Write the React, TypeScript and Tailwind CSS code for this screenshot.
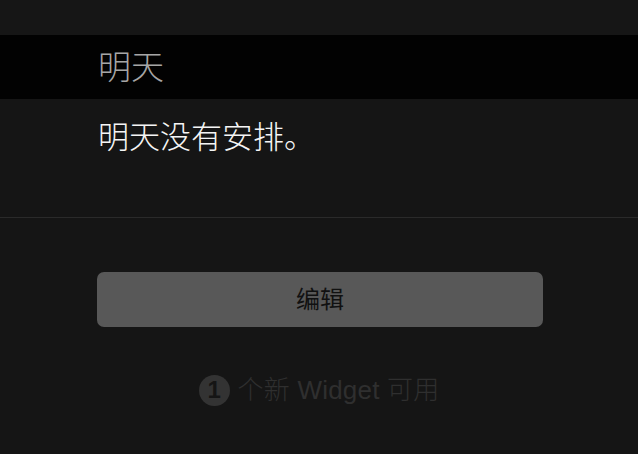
export default function App() {
  const font = { fontFamily: '"Liberation Sans", "Noto Sans CJK SC", sans-serif' };
  return (
    <div className="w-[638px] h-[454px] bg-[#151515] overflow-hidden flex flex-col" style={font}>
      <div className="h-[35px] bg-[#161616] shrink-0" />
      <div className="h-[64px] bg-[#020202] shrink-0 flex items-center pl-[98px]">
        <span className="text-[33px] leading-none font-light text-[#a6a6a6]">明天</span>
      </div>
      <div className="h-[118px] shrink-0 pl-[98px] pt-[20px]">
        <div className="text-[31px] leading-[38px] font-light text-[#f5f5f5]">明天没有安排。</div>
      </div>
      <div className="h-px bg-[#2a2a2a] shrink-0" />
      <div className="flex flex-col items-center">
        <button className="mt-[54px] ml-[2px] w-[446px] h-[55px] rounded-[7px] bg-[#585858] text-[24px] font-normal text-[#111111] flex items-center justify-center">
          编辑
        </button>
        <div className="mt-[45px] flex items-center gap-[8px] h-[36px]">
          <div className="w-[31px] h-[31px] rounded-full bg-[#333333] flex items-center justify-center text-[#151515] text-[24px] font-bold leading-none">
            1
          </div>
          <span className="text-[26px] leading-[36px] font-light tracking-[0.2px] text-[#2f2f2f]">个新 Widget 可用</span>
        </div>
      </div>
    </div>
  );
}
